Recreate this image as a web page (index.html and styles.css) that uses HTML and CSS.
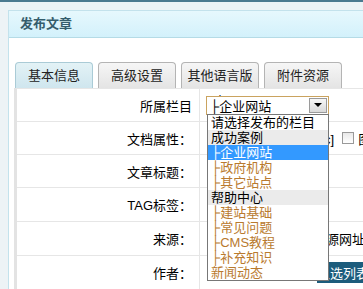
FILE: index.html
```html
<!DOCTYPE html>
<html lang="zh-CN">
<head>
    <meta charset="UTF-8">
    <title>发布文章</title>
    <link rel="stylesheet" href="styles.css">
</head>
<body>
    <div class="topbar"></div>

    <div class="wrap">
        <div class="panel">
            <div class="panel-head">发布文章</div>

            <div class="panel-body">
                <!-- tabs -->
                <ul class="tabs">
                    <li class="tab active">基本信息</li>
                    <li class="tab">高级设置</li>
                    <li class="tab">其他语言版本</li>
                    <li class="tab">附件资源</li>
                </ul>

                <!-- form rows -->
                <div class="form">
                    <div class="row">
                        <div class="label">所属栏目</div>
                        <div class="value">
                            <div class="select">
                                <span class="select-text">├企业网站</span>
                                <span class="select-btn"><i class="arrow"></i></span>
                                <ul class="options">
                                    <li>请选择发布的栏目</li>
                                    <li class="group">成功案例</li>
                                    <li class="sub selected">├企业网站</li>
                                    <li class="sub">├政府机构</li>
                                    <li class="sub">├其它站点</li>
                                    <li class="group">帮助中心</li>
                                    <li class="sub">├建站基础</li>
                                    <li class="sub">├常见问题</li>
                                    <li class="sub">├CMS教程</li>
                                    <li class="sub">├补充知识</li>
                                    <li class="sub">新闻动态</li>
                                </ul>
                            </div>
                        </div>
                    </div>
                    <div class="row">
                        <div class="label">文档属性：</div>
                        <div class="value">
                            <span class="check"></span>头条[h] <span class="check"></span>推荐[c] <span class="check"></span>图片[p]
                        </div>
                    </div>
                    <div class="row">
                        <div class="label">文章标题：</div>
                        <div class="value"></div>
                    </div>
                    <div class="row">
                        <div class="label">TAG标签：</div>
                        <div class="value"></div>
                    </div>
                    <div class="row">
                        <div class="label">来源：</div>
                        <div class="value"><span class="field source"></span>选择来源网址</div>
                    </div>
                    <div class="row">
                        <div class="label">作者：</div>
                        <div class="value"><span class="field author"></span><span class="picked">从选列表</span></div>
                    </div>
                </div>
            </div>
        </div>
    </div>
</body>
</html>
```

FILE: styles.css
```css
html, body {
    height: 100%;
    overflow: hidden;
}

body {
    margin: 0;
    background-color: #edf3f6;
    font-family: "Liberation Sans", "Noto Sans CJK SC", sans-serif;
    font-size: 12px;
    color: #000;
}

.topbar {
    height: 2px;
    background-color: #4c7a90;
}

.wrap {
    padding: 8px 0 0 8px;
}

.panel {
    width: 420px;
    border: 1px solid #c3e2ec;
    background-color: #fff;
}

.panel-head {
    height: 26px;
    line-height: 26px;
    padding-left: 11px;
    background: linear-gradient(#e6f8fd, #d3f1fb);
    border-bottom: 1px solid #b5dbe6;
    font-size: 13px;
    font-weight: bold;
    color: #355d6c;
}

.panel-body {
    padding: 24px 0 0 6px;
}

.tabs {
    display: flex;
    gap: 5px;
    margin: 0;
    padding: 0;
    list-style: none;
}

.tab {
    width: 76px;
    height: 25px;
    line-height: 26px;
    text-align: center;
    font-size: 13px;
    color: #222;
    border: 1px solid #b4b4b4;
    border-bottom: none;
    border-radius: 4px 4px 0 0;
    background: linear-gradient(#f6f6f6, #e4e4e4);
}

.tab.active {
    background: linear-gradient(#e3f2f6, #cfe6ee);
    border-color: #aacbd6;
}

.form {
    border-left: 3px solid #e3e3e3;
    border-top: 1px solid #e6e6e6;
    margin-left: -1px;
}

.row {
    display: grid;
    grid-template-columns: 183px 1fr;
    height: 32px;
    border-bottom: 1px solid #e6e6e6;
}

.row:nth-child(n+4) {
    height: 33px;
}

.label {
    display: flex;
    align-items: center;
    justify-content: flex-end;
    padding-right: 7px;
    border-right: 1px solid #e6e6e6;
    font-size: 13px;
}

.value {
    display: flex;
    align-items: center;
    padding-left: 6px;
    white-space: nowrap;
    font-size: 13px;
}

/* category select, opened */
.select {
    position: relative;
    width: 121px;
    height: 17px;
    border: 1px solid #caa35f;
    background-color: #fff;
    display: flex;
    align-items: center;
}

.select-text {
    flex: 1;
    padding-left: 3px;
    font-size: 13px;
}

.select-btn {
    width: 16px;
    height: 13px;
    margin-right: 1px;
    border: 1px solid #9a9a9a;
    background: linear-gradient(#f7f7f7, #d9d9d9);
    display: flex;
    align-items: center;
    justify-content: center;
}

.arrow {
    width: 0;
    height: 0;
    border-left: 4px solid transparent;
    border-right: 4px solid transparent;
    border-top: 4px solid #000;
}

.options {
    position: absolute;
    top: 17px;
    left: 0;
    width: 120px;
    margin: 0;
    padding: 0;
    list-style: none;
    background-color: #fff;
    border: 1px solid #777;
    z-index: 2;
}

.options li {
    height: 15px;
    line-height: 15px;
    padding-left: 3px;
    font-size: 13px;
}

.options .group {
    background-color: #ebebeb;
}

.options .sub {
    color: #b97a2e;
}

.options .selected {
    background-color: #3399ff;
    color: #fff;
}

.check {
    display: inline-block;
    width: 10px;
    height: 10px;
    margin: 0 4px 0 8px;
    border: 1px solid #999;
    background: linear-gradient(#e8e8e8, #fff);
}

.field {
    display: inline-block;
    height: 16px;
    margin-right: 4px;
}

.field.source {
    width: 77px;
}

.field.author {
    width: 107px;
}

.picked {
    background-color: #1c5c7c;
    color: #fff;
    padding: 1px 0;
}
```
